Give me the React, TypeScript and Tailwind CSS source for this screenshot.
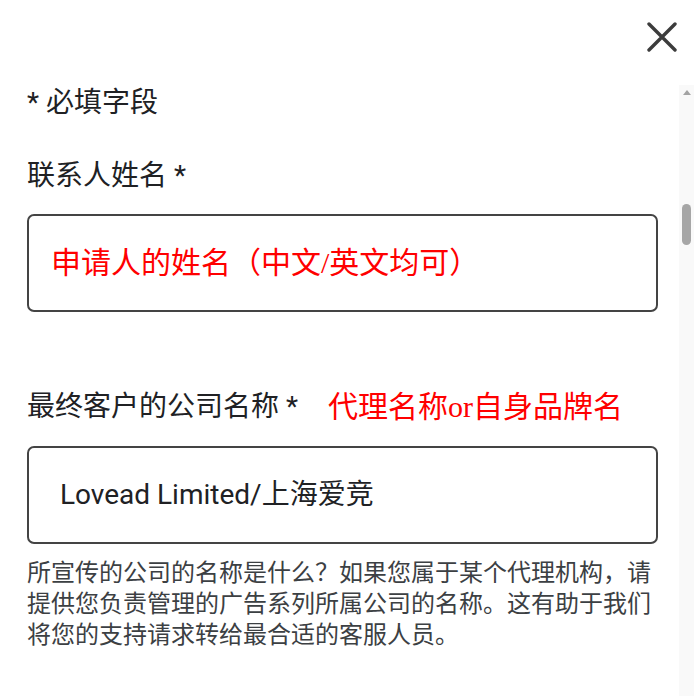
import { useState } from 'react';

const sans = "font-['Roboto','Noto_Sans_CJK_SC',sans-serif]";
const serif = "font-['Liberation_Serif','Noto_Sans_CJK_SC',serif]";

function CloseIcon() {
  return (
    <svg width="30" height="30" viewBox="0 0 30 30" fill="none">
      <path d="M2 2 L28 28 M28 2 L2 28" stroke="#3c3c3c" strokeWidth="3.4" strokeLinecap="round" />
    </svg>
  );
}

function ScrollBar() {
  return (
    <div className="w-[15px] h-full bg-[#f9f9f9] flex flex-col items-center">
      <svg width="10" height="8" viewBox="0 0 10 8" className="mt-[3px]">
        <path d="M1 7 L5 2 L9 7 Z" fill="#a3a3a3" />
      </svg>
      <div className="mt-[108px] w-[9px] h-[41px] rounded-full bg-[#a6a6a6]" />
    </div>
  );
}

export default function App() {
  const [company, setCompany] = useState('Lovead Limited/上海爱竞');

  return (
    <div className={`w-[697px] h-[696px] bg-white overflow-hidden flex flex-col ${sans}`}>
      <div className="h-[85px] shrink-0 flex justify-end pr-[20px] pt-[22px]">
        <button className="w-[30px] h-[30px]">
          <CloseIcon />
        </button>
      </div>

      <div className="flex-1 flex min-h-0">
        <div className="w-[658px] pl-[27px] flex flex-col">
          <div className="text-[28px] leading-[36px] text-[#202124]">* 必填字段</div>

          <div className="mt-[37px] text-[28px] leading-[36px] text-[#202124]">联系人姓名 *</div>
          <div className="mt-[20px] h-[98px] border-2 border-[#444] rounded-[7px] flex items-center pl-[22px]">
            <span className={`${serif} text-[30px] leading-[36px] text-[#ff0000]`}>
              申请人的姓名（中文/英文均可）
            </span>
          </div>

          <div className="mt-[77px] flex items-center h-[36px]">
            <span className="text-[28px] leading-[36px] text-[#202124]">最终客户的公司名称 *</span>
            <span className={`${serif} ml-[30px] text-[30px] leading-[36px] text-[#ff0000]`}>
              代理名称or自身品牌名
            </span>
          </div>
          <div className="mt-[21px] h-[98px] border-2 border-[#444] rounded-[7px] flex items-center pl-[31px]">
            <input
              value={company}
              onChange={(e) => setCompany(e.target.value)}
              className="w-full outline-none bg-transparent text-[28px] leading-[36px] text-[#202124]"
            />
          </div>

          <p className="mt-[14px] text-[24px] leading-[31px] text-[#3c4043]">
            所宣传的公司的名称是什么？如果您属于某个代理机构，请提供您负责管理的广告系列所属公司的名称。这有助于我们将您的支持请求转给最合适的客服人员。
          </p>
        </div>
        <div className="w-[21px]" />
        <ScrollBar />
      </div>
    </div>
  );
}
